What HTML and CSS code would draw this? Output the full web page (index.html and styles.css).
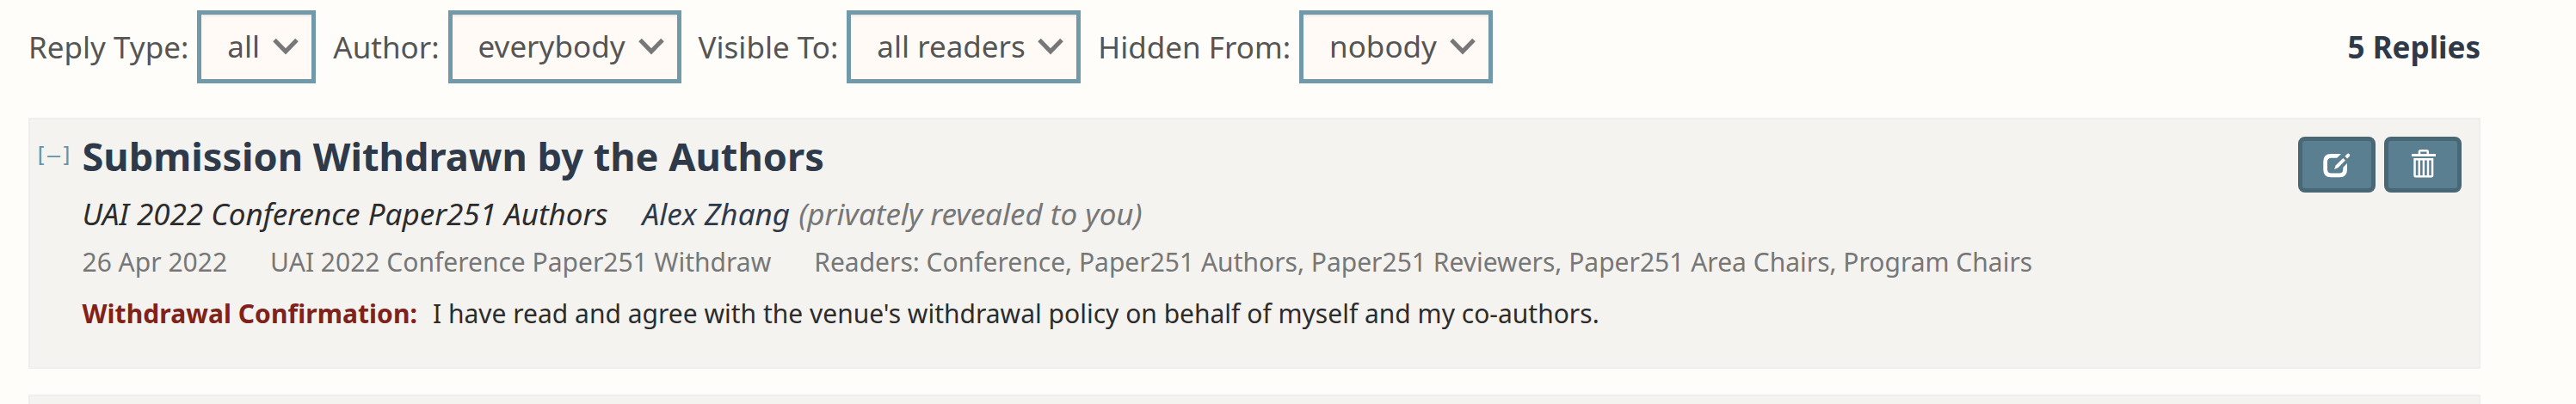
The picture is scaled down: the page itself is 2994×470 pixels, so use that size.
FILE: index.html
```html
<!DOCTYPE html>
<html lang="en">
<head>
<meta charset="utf-8">
<title>Replies</title>
<link rel="stylesheet" href="styles.css">
</head>
<body>
<main class="forum">
  <div class="filters">
    <div class="filter"><span class="filter-label">Reply Type:</span><div class="select select-type"><span>all</span><svg class="chevron" viewBox="0 0 30 20"><path d="M2 2.5 L15 15.8 L28 2.5"/></svg></div></div>
    <div class="filter"><span class="filter-label">Author:</span><div class="select select-author"><span>everybody</span><svg class="chevron" viewBox="0 0 30 20"><path d="M2 2.5 L15 15.8 L28 2.5"/></svg></div></div>
    <div class="filter"><span class="filter-label">Visible To:</span><div class="select select-visible"><span>all readers</span><svg class="chevron" viewBox="0 0 30 20"><path d="M2 2.5 L15 15.8 L28 2.5"/></svg></div></div>
    <div class="filter"><span class="filter-label">Hidden From:</span><div class="select select-hidden"><span>nobody</span><svg class="chevron" viewBox="0 0 30 20"><path d="M2 2.5 L15 15.8 L28 2.5"/></svg></div></div>
    <strong class="count">5 Replies</strong>
  </div>
  <article class="note">
    <a class="collapse">[–]</a>
    <div class="note-body">
      <h2 class="title">Submission Withdrawn by the Authors</h2>
      <div class="authors"><span class="signature">UAI 2022 Conference Paper251 Authors</span><span><span class="author">Alex Zhang</span> <span class="private">(privately revealed to you)</span></span></div>
      <div class="meta"><span>26 Apr 2022</span><span>UAI 2022 Conference Paper251 Withdraw</span><span>Readers: Conference, Paper251 Authors, Paper251 Reviewers, Paper251 Area Chairs, Program Chairs</span></div>
      <div class="field"><strong class="field-name">Withdrawal Confirmation:</strong><span>I have read and agree with the venue's withdrawal policy on behalf of myself and my co-authors.</span></div>
    </div>
    <div class="actions">
      <button class="btn" aria-label="Edit"><svg class="icon" viewBox="0 0 32 34"><path class="solid" d="M21 5L16.2 9.8H9.5Q5 9.8 5 14.3V23Q5 27.5 9.5 27.5H18.8Q23.3 27.5 23.3 23V20.7L28 16V23.3Q28 32.3 19 32.3H9.3Q.3 32.3 .3 23.3V14Q.3 5 9.3 5Z"/><path class="solid" d="M13.1 22.9L14.6 18.4L23.3 9.9L25.9 12.4L17.6 21ZM25.4 7.7L28.1 5Q29.2 3.9 30.6 5.2Q31.9 6.6 30.8 7.8L28.2 10.4Z"/></svg></button>
      <button class="btn" aria-label="Delete"><svg class="icon" viewBox="0 0 32 34"><path class="solid" fill-rule="evenodd" d="M3 5H10.7V2.5Q10.7 0 13.2 0H20.5Q23 0 23 2.5V5H31V8H3ZM13.2 5H20.5V2.5H13.2ZM5.3 10H28.3V30Q28.3 32.5 25.8 32.5H7.8Q5.3 32.5 5.3 30ZM7.8 12.6V30H10.5V12.6ZM13 12.6V30H15.7V12.6ZM18.1 12.6V30H20.8V12.6ZM23.2 12.6V30H25.8V12.6Z"/></svg></button>
    </div>
  </article>
  <article class="note note-next"></article>
</main>
</body>
</html>
```
FILE: styles.css
```css
* { box-sizing: border-box; }
body {
  margin: 0;
  background: #fffdfa;
  color: #2c2c2c;
  font-family: "Noto Sans", sans-serif;
}
.forum {
  width: 2883px;
  height: 470px;
  padding: 12px 0 0 33px;
}
.filters {
  display: flex;
  align-items: center;
  gap: 20px;
  height: 85px;
  margin-bottom: 40px;
  font-size: 35px;
  color: #555;
}
.filter { display: flex; align-items: center; gap: 10px; white-space: nowrap; }
.filter-label { line-height: 48px; }
.select {
  display: flex;
  align-items: center;
  justify-content: space-between;
  height: 85px;
  padding: 0 15px 2px 30px;
  border: 5px solid #7099aa;
  background: #fffaf5;
  box-shadow: inset 0 2px 2px rgba(0, 0, 0, .075);
}
.select-type { width: 138px; }
.select-author { width: 271px; }
.select-visible { width: 272px; }
.select-hidden { width: 225px; }
.chevron { width: 30px; height: 20px; fill: none; stroke: #777; stroke-width: 5; }
.count { margin-left: auto; color: #2e3a4a; }
.note {
  display: flex;
  height: 292px;
  margin-bottom: 30px;
  padding: 17px 20px 0 5px;
  border: 2px solid #eee;
  background: #f4f3f0;
  white-space: nowrap;
}
.note-next { height: 11px; margin: 0; padding: 0; border-bottom: 0; }
.collapse {
  width: 55.5px;
  padding-top: 11px;
  color: #6593a7;
  font: 25px/28px "DejaVu Sans Mono", monospace;
}
.note-body { flex: 1; }
.title { margin: 1px 0 0; font-size: 45.15px; line-height: 50px; color: #2e3a4a; }
.authors { display: flex; gap: 40px; margin-top: 17px; font-size: 35px; line-height: 50px; font-style: italic; }
.author { color: #2e3a4a; }
.private { margin-left: 1px; color: #777; }
.meta { display: flex; gap: 50px; margin-top: 11px; font-size: 30px; line-height: 40px; color: #777; }
.field { display: flex; gap: 18px; margin-top: 20px; font-size: 30px; line-height: 40px; }
.field-name { color: #80221a; letter-spacing: .06px; }
.actions { display: flex; gap: 10px; padding-top: 3px; }
.btn {
  display: flex;
  align-items: center;
  justify-content: center;
  width: 90px;
  height: 65px;
  padding: 0 0 2px;
  border: 5px solid #496876;
  border-radius: 8px;
  background: #5a7f91;
}
.icon { width: 32px; height: 34px; }
.solid { fill: #fff; }
```
